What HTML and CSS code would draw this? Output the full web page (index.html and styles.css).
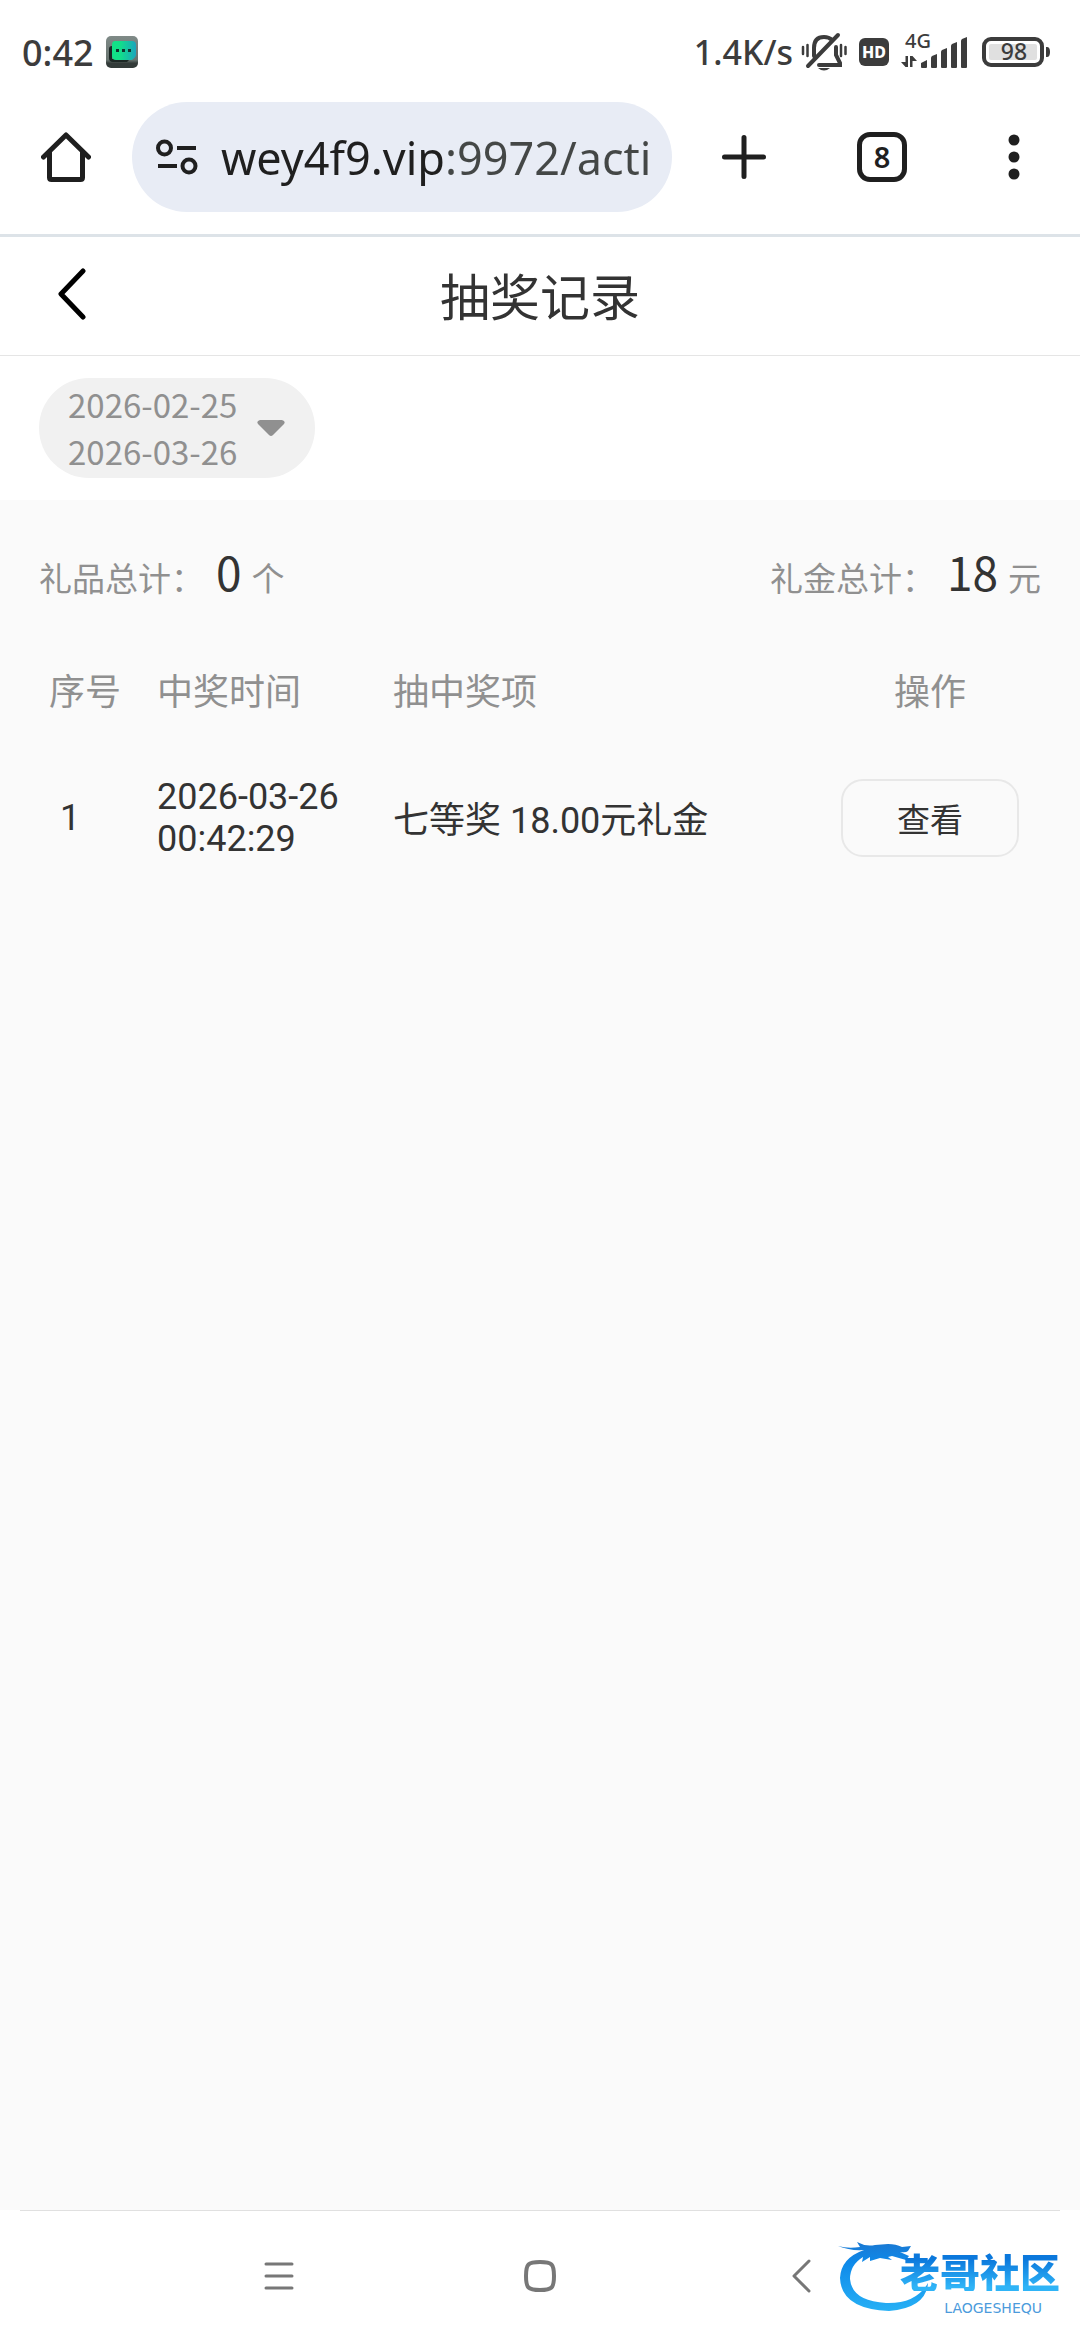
FILE: index.html
```html
<!DOCTYPE html>
<html lang="zh-CN">

<head>
    <meta charset="UTF-8">
    <meta name="viewport" content="width=device-width, initial-scale=1.0">
    <title>抽奖记录</title>
    <link rel="stylesheet" href="styles.css">
</head>

<body>

    <div class="status">
        <span class="time">0:42</span>
        <svg class="app" width="32" height="32" viewBox="0 0 32 32">
            <defs>
                <linearGradient id="bg" x1="0" y1="0" x2="0" y2="1">
                    <stop offset="0" stop-color="#7f8a87" />
                    <stop offset="0.75" stop-color="#68736f" />
                    <stop offset="0.85" stop-color="#333b39" />
                </linearGradient>
                <linearGradient id="bubble" x1="0" y1="0" x2="1" y2="0">
                    <stop offset="0.3" stop-color="#12e287" />
                    <stop offset="1" stop-color="#1aa5bd" />
                </linearGradient>
            </defs>
            <rect width="32" height="32" rx="5" fill="url(#bg)" />
            <path d="M3 13q0-3 3-3v13h18l-3 3H7q-4 0-4-4z" fill="#1c2724" />
            <path d="M9 5h17q4 0 4 4v10q0 2-4 5H10q-4 0-4-4V9q0-4 3-4z" fill="url(#bubble)" />
            <path d="M10 13h3v3h-3zM16 13h3v3h-3zM22 13h3v3h-3z" fill="#10342e" />
        </svg>
        <span class="speed">1.4K/s</span>
        <svg class="bell" width="46" height="40" viewBox="0 0 46 40" fill="none" stroke="#3c3c3c">
            <path d="M13 24V16q0-11 10-11 5 0 8 3M35 15v8l4 8v2H18M7 34L37 3" stroke-width="4" stroke-linecap="round" />
            <path d="M2 15v7M6.500 13v11M40 13v11M44.500 15v7" stroke-width="2.500" stroke-linecap="round" />
            <path d="M17 36h12q-6 5-12 0z" fill="#3c3c3c" stroke="none" />
        </svg>
        <svg class="hd" width="30" height="28" viewBox="0 0 30 28">
            <rect width="30" height="28" rx="6" fill="#3c3c3c" />
            <text x="15" y="20" text-anchor="middle">HD</text>
        </svg>
        <svg class="signal" width="68" height="48" viewBox="0 -6 68 48" fill="#3c3c3c">
            <text x="4" y="14">4G</text>
            <path d="M4.500 22h2.500v11h-2.500l-4.500-5h4.500zM9 22h2.500l4.500 5h-4.500v6H9z" />
            <path d="M20 29l6-3v7q0 1-1 1h-4q-1 0-1-1zM30 24q0-1 1-2l5-2v13q0 1-1 1h-4q-1 0-1-1zM40 18q0-1 1-2l5-2v19q0 1-1 1h-4q-1 0-1-1zM50 12q0-1 1-2l5-2v25q0 1-1 1h-4q-1 0-1-1zM60 7q0-1 1-2l5-2v30q0 1-1 1h-4q-1 0-1-1z" />
        </svg>
        <svg class="battery" width="68" height="40" viewBox="0 -5 68 40">
            <rect x="2" y="2" width="58" height="26" rx="7" fill="none" stroke="#3c3c3c" stroke-width="4" />
            <rect x="7" y="7" width="48" height="16" rx="2" fill="#e0e0e0" />
            <path d="M64 10h1q3 0 3 5t-3 5h-1z" fill="#3c3c3c" />
            <text x="32" y="23" text-anchor="middle">98</text>
        </svg>
    </div>

    <div class="toolbar">
        <button class="home" aria-label="主页">
            <svg width="50" height="50" viewBox="0 0 50 50" fill="none" stroke="#1f1f1f" stroke-linejoin="round" stroke-linecap="round">
                <path d="M2.500 25L25 3l22.500 22" stroke-width="5" />
                <path d="M8.500 20v25.500q0 2 2 2h29q2 0 2-2V20" stroke-width="5" />
            </svg>
        </button>
        <div class="address">
            <svg width="42" height="36" viewBox="0 0 42 36" fill="none" stroke="#1f1f1f" stroke-width="4">
                <circle cx="8.500" cy="9" r="6.500" />
                <path d="M21 9h19M2 27h19" />
                <circle cx="33" cy="27" r="6.500" />
            </svg>
            <input type="text" value="wey4f9.vip:9972/acti" aria-label="网址">
        </div>
        <button class="add" aria-label="新标签页">
            <svg width="44" height="44" viewBox="0 0 44 44" stroke="#1f1f1f" stroke-width="5" stroke-linecap="round">
                <path d="M22 2.500v39M2.500 22h39" />
            </svg>
        </button>
        <button class="tabs" aria-label="标签页"><span>8</span></button>
        <button class="more" aria-label="更多">
            <svg width="12" height="46" viewBox="0 0 12 46" fill="#1f1f1f">
                <circle cx="6" cy="6" r="5.500" />
                <circle cx="6" cy="23" r="5.500" />
                <circle cx="6" cy="40" r="5.500" />
            </svg>
        </button>
    </div>

    <div class="header">
        <button class="back" aria-label="返回">
            <svg width="30" height="52" viewBox="0 0 30 52" fill="none" stroke="#000" stroke-width="5" stroke-linecap="round" stroke-linejoin="round">
                <path d="M26 3L4 26l22 23" />
            </svg>
        </button>
        <h1>抽奖记录</h1>
    </div>

    <div class="filter">
        <button class="date">
            <span>2026-02-25<br>2026-03-26</span>
            <svg width="28" height="16" viewBox="0 0 28 16" fill="#909090">
                <path d="M3 0h22q4 1 2 4L16 15q-2 2-4 0L1 4q-2-3 2-4z" />
            </svg>
        </button>
    </div>

    <div class="container">
        <div class="total">
            <p>礼品总计：<strong>0</strong>个</p>
            <p>礼金总计：<strong>18</strong>元</p>
        </div>
        <table>
            <thead>
                <tr>
                    <th class="num">序号</th>
                    <th class="when">中奖时间</th>
                    <th class="prize">抽中奖项</th>
                    <th class="action">操作</th>
                </tr>
            </thead>
            <tbody>
                <tr>
                    <td class="num">1</td>
                    <td class="when">2026-03-26<br>00:42:29</td>
                    <td class="prize">七等奖 18.00元礼金</td>
                    <td class="action"><button class="view">查看</button></td>
                </tr>
            </tbody>
        </table>
    </div>

    <div class="bottom">
        <div class="keys">
            <button aria-label="菜单">
                <svg width="30" height="30" viewBox="0 0 30 30" stroke="#777" stroke-width="3" stroke-linecap="round">
                    <path d="M2 3h26M2 15h26M2 27h26" />
                </svg>
            </button>
            <button aria-label="桌面">
                <svg width="32" height="32" viewBox="0 0 32 32" fill="none" stroke="#777" stroke-width="4">
                    <path d="M16 2q9 0 11.500 2.500T30 16t-2.500 11.500T16 30 4.500 27.500 2 16 4.500 4.500 16 2z" />
                </svg>
            </button>
            <button aria-label="后退">
                <svg width="20" height="34" viewBox="0 0 20 34" fill="none" stroke="#777" stroke-width="3" stroke-linecap="round" stroke-linejoin="round">
                    <path d="M18 2L3 17l15 15" />
                </svg>
            </button>
        </div>
        <div class="logo">
            <svg width="100" height="80" viewBox="0 0 100 80">
                <defs>
                    <linearGradient id="dragon" x1="0" y1="0" x2="0" y2="1">
                        <stop offset="0" stop-color="#1a78d2" />
                        <stop offset="0.3" stop-color="#0e8aea" />
                        <stop offset="1" stop-color="#27b0f5" />
                    </linearGradient>
                </defs>
                <path fill="url(#dragon)" d="M0 10q10 3 22 1l-3-5q9 5 18 3l13-1q8 0 14 3l9-1-3 5q-2 2-8 1l9 4-3 4-14-4-4 1 4 3-12-2-10 3v-4l-8 5 1-5q-13 8-13 22 2 22 36 24 30 1 42-20-2 25-39 28Q3 73 2 42 3 22 26 14q-14 1-26-4z" />
            </svg>
            <b>老哥社区</b>
            <small>LAOGESHEQU</small>
        </div>
    </div>

</body>

</html>
```

FILE: styles.css
```css
* {
    margin: 0;
    padding: 0;
    box-sizing: border-box;
}

body {
    display: flex;
    flex-direction: column;
    min-height: 100vh;
    background-color: #fff;
    color: #333;
    font-family: "Noto Sans CJK SC", sans-serif;
}

button {
    border: none;
    background: none;
    color: inherit;
    font-family: inherit;
    cursor: pointer;
}

svg {
    display: block;
    flex-shrink: 0;
}

/* 状态栏 */
.status {
    display: flex;
    align-items: center;
    height: 102px;
    padding: 2px 30px 0 22px;
    color: #3c3c3c;
    font-family: "Noto Sans", sans-serif;
    font-size: 34px;
    font-weight: 500;
}

.status text {
    font-family: "Noto Sans", sans-serif;
}

.time {
    font-size: 36px;
}

.app {
    margin-left: 12px;
}

.speed {
    margin-left: auto;
}

.bell {
    margin-left: 8px;
}

.hd {
    margin-left: 12px;
}

.hd text {
    fill: #fff;
    font-size: 16px;
    font-weight: 800;
}

.signal {
    margin-left: 12px;
}

.signal text {
    font-size: 20px;
}

.battery {
    margin-left: 13px;
}

.battery text {
    fill: #3c3c3c;
    font-size: 23px;
}

/* 浏览器地址栏 */
.toolbar {
    display: flex;
    padding-bottom: 22px;
    border-bottom: 3px solid #dde3e8;
}

.toolbar button {
    display: flex;
    align-items: center;
    justify-content: center;
    width: 132px;
    flex-shrink: 0;
}

.toolbar .add {
    width: 144px;
}

.address {
    display: flex;
    align-items: center;
    gap: 23px;
    flex: 1;
    min-width: 0;
    height: 110px;
    padding: 0 20px 0 24px;
    border-radius: 55px;
    background-color: #e8ecf5;
}

.address input {
    flex: 1;
    min-width: 0;
    border: none;
    outline: none;
    background: linear-gradient(90deg, #1f1f1f 225px, #444746 225px);
    -webkit-background-clip: text;
    background-clip: text;
    color: transparent;
    font-family: "Noto Sans", sans-serif;
    font-size: 45px;
}

.tabs span {
    width: 50px;
    height: 50px;
    border: 5px solid #1f1f1f;
    border-radius: 13px;
    color: #1f1f1f;
    font-family: "Noto Sans", sans-serif;
    font-size: 29px;
    font-weight: 600;
    line-height: 40px;
    text-align: center;
}

/* 标题 */
.header {
    display: grid;
    grid-template-columns: 1fr auto 1fr;
    align-items: center;
    height: 119px;
    padding: 0 57px 4px;
    border-bottom: 1px solid #e5e5e5;
}

.back {
    justify-self: start;
}

.header h1 {
    font-size: 50px;
    font-weight: normal;
}

.filter {
    padding: 22px 39px;
}

.date {
    display: flex;
    align-items: center;
    gap: 20px;
    height: 100px;
    padding: 0 30px 0 29px;
    border-radius: 50px;
    background-color: #f1f1f1;
    color: #909090;
    font-size: 33px;
    line-height: 47px;
}

/* 记录列表 */
.container {
    flex: 1;
    padding-top: 38px;
    background-color: #fafafa;
}

.total {
    display: flex;
    justify-content: space-between;
    padding: 0 39px;
    color: #909090;
    font-size: 33px;
    line-height: 78px;
}

.total strong {
    margin: 0 10px 0 12px;
    color: #333;
    font-size: 46px;
    font-weight: normal;
    line-height: 1;
}

table {
    width: 100%;
    border-collapse: collapse;
    table-layout: fixed;
    font-family: Roboto, "Noto Sans CJK SC", sans-serif;
    font-size: 36px;
    line-height: 42px;
    text-align: left;
}

th {
    height: 150px;
    padding-top: 4px;
    color: #909090;
    font-weight: normal;
}

td {
    height: 104px;
}

.num {
    width: 157px;
    padding-left: 49px;
}

td.num {
    padding-left: 60px;
}

.when {
    width: 236px;
}

td.prize {
    padding-top: 6px;
}

.action {
    width: 300px;
    text-align: center;
}

.view {
    width: 178px;
    height: 78px;
    border: 2px solid #e8e8e8;
    border-radius: 22px;
    font-size: 33px;
}

/* 底部按键 */
.bottom {
    position: relative;
    padding: 0 20px;
}

.keys {
    display: grid;
    grid-template-columns: repeat(3, 1fr);
    height: 130px;
    padding: 0 128px;
    border-top: 1px solid #e0e0e0;
}

.keys button {
    display: flex;
    align-items: center;
    justify-content: center;
}

.logo {
    position: absolute;
    right: 20px;
    bottom: 24px;
    width: 222px;
    height: 80px;
}

.logo b {
    position: absolute;
    right: 0;
    top: 15px;
    background: linear-gradient(#0b78dc 20%, #2fb4f7 90%);
    -webkit-background-clip: text;
    background-clip: text;
    color: transparent;
    font-size: 40px;
    font-weight: 900;
    line-height: 40px;
}

.logo small {
    position: absolute;
    right: 18px;
    top: 65px;
    color: #4c9bdc;
    font-family: "DejaVu Sans", sans-serif;
    font-size: 14px;
    line-height: 14px;
}
```
